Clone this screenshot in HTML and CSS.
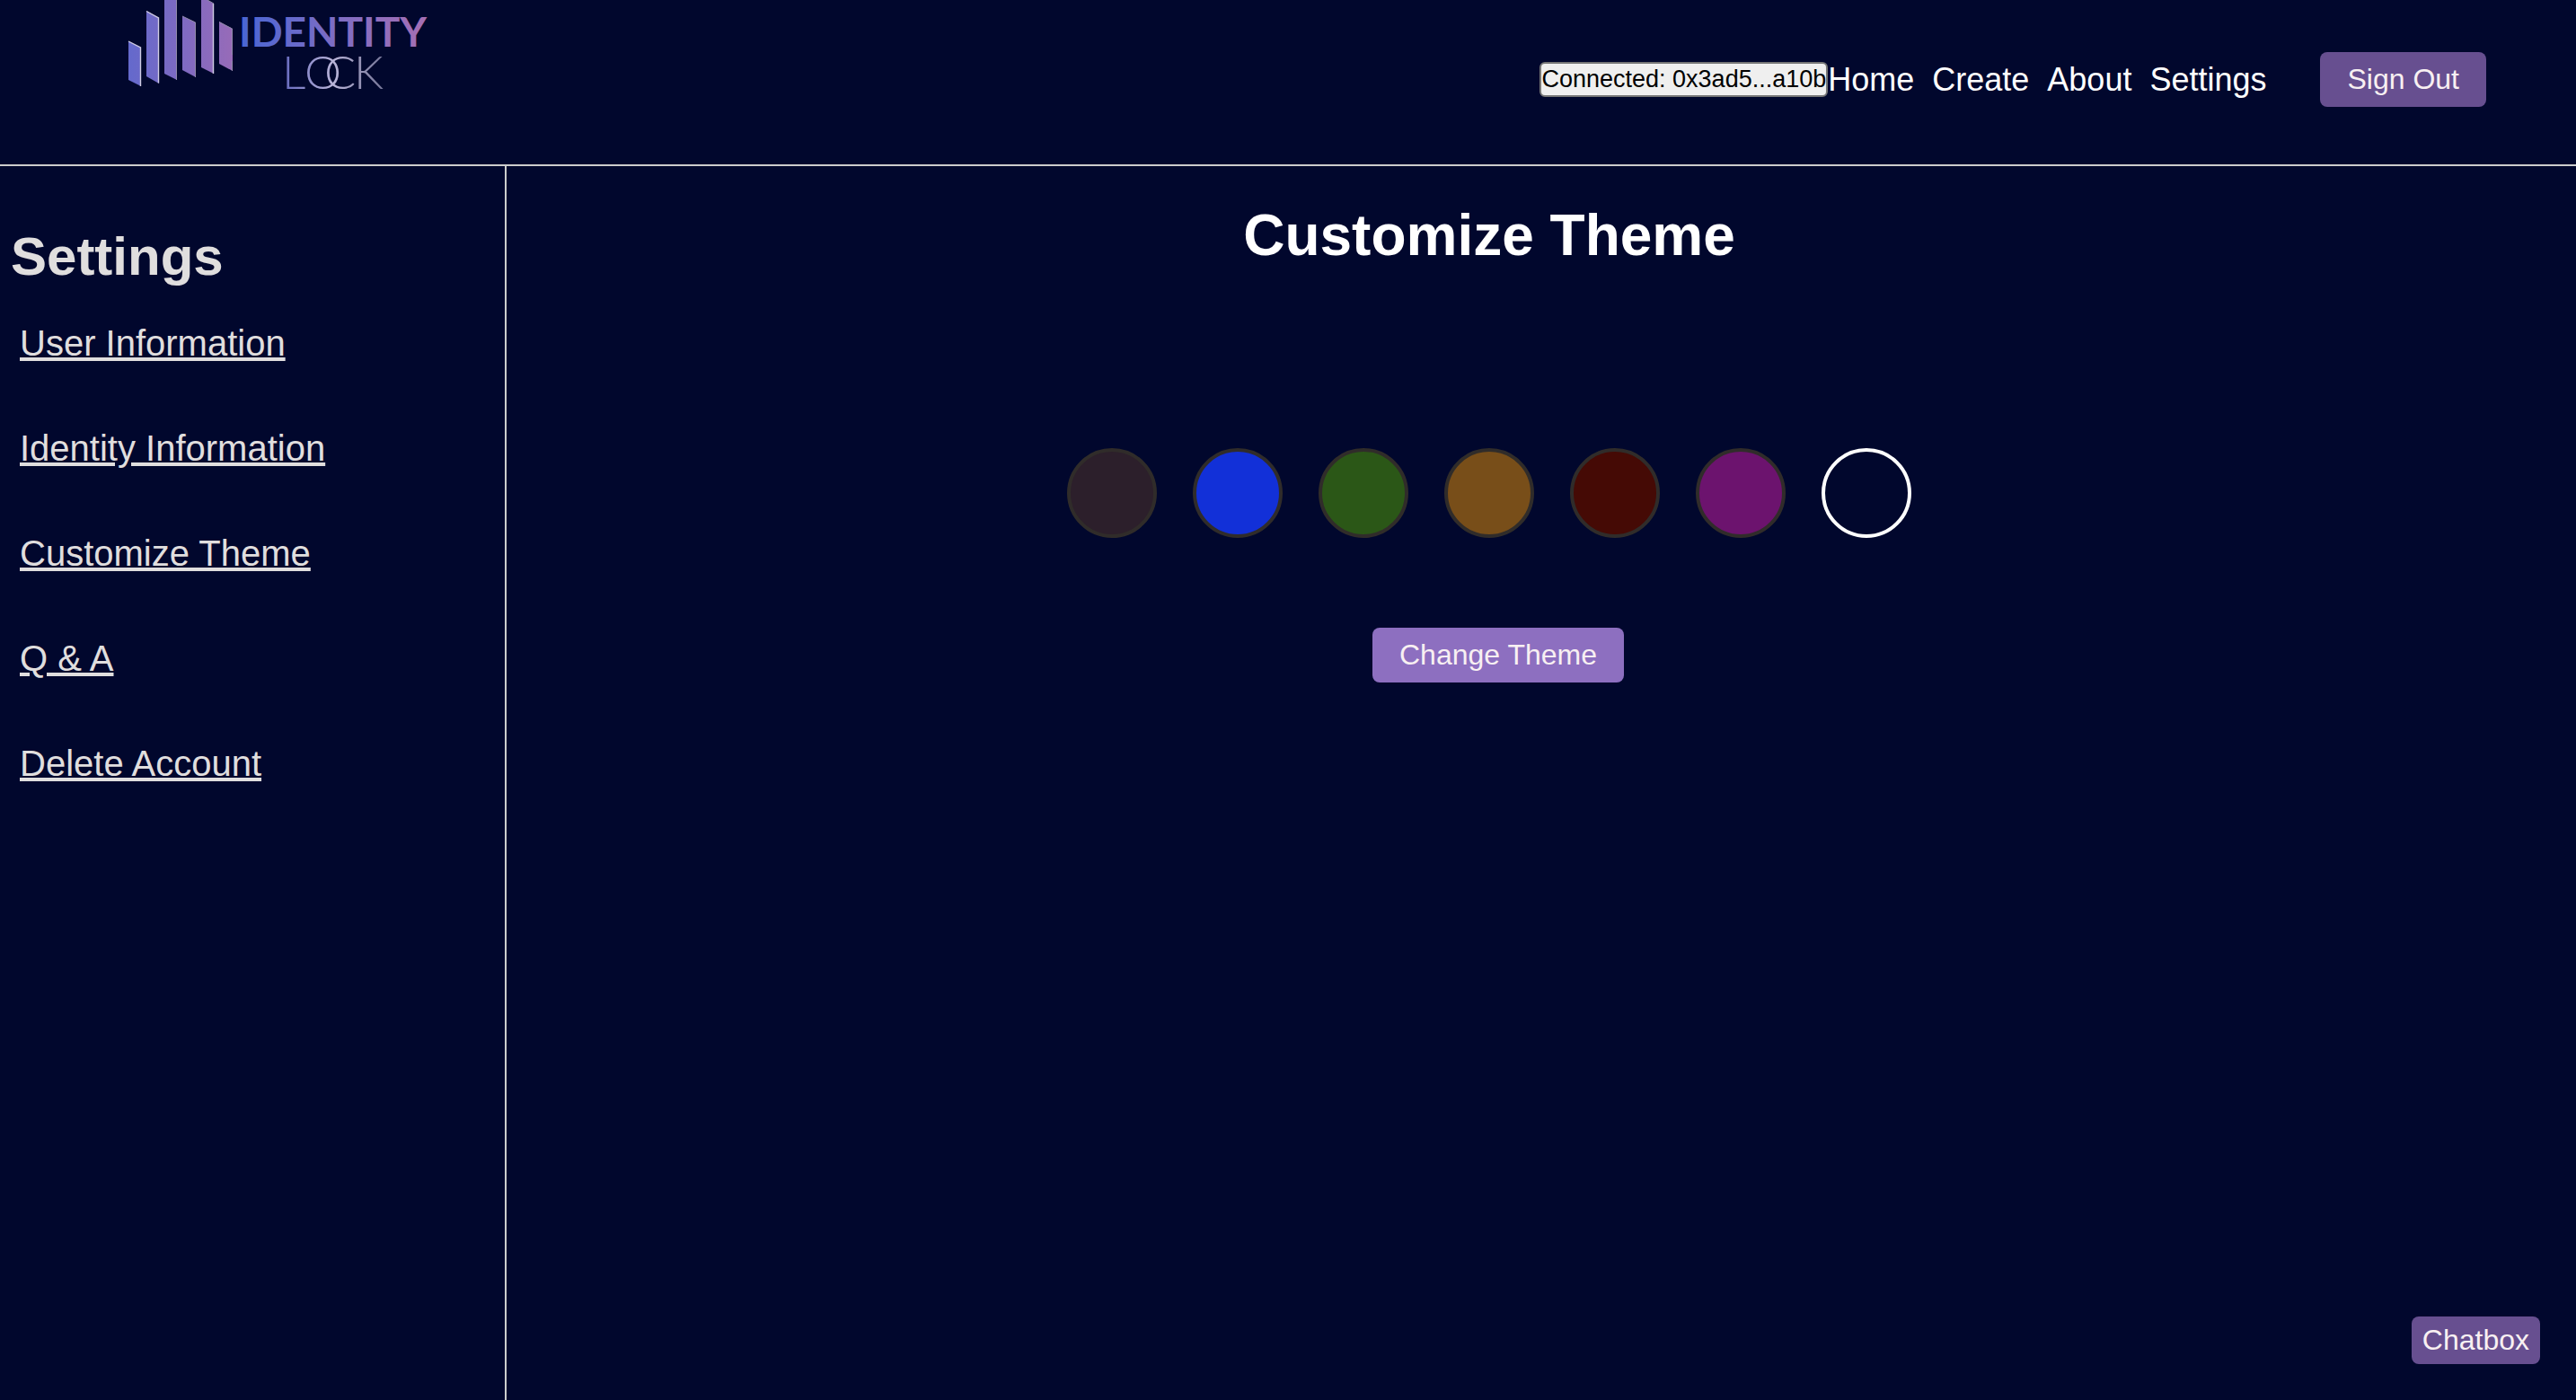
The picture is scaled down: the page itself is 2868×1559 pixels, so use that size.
FILE: index.html
```html
<!DOCTYPE html>
<html lang="en">
<head>
<meta charset="utf-8">
<meta name="viewport" content="width=device-width, initial-scale=1">
<title>Identity Lock - Customize Theme</title>
<link rel="stylesheet" href="styles.css">
</head>
<body>
<header class="header">
  <a class="logo" href="#" aria-label="Identity Lock">
    <svg class="logo-art" viewBox="0 0 360 110" aria-hidden="true">
      <defs>
        <linearGradient id="bars" gradientUnits="userSpaceOnUse" x1="23" y1="0" x2="139" y2="0">
          <stop offset="0" stop-color="#6469cc"/>
          <stop offset="1" stop-color="#976bb8"/>
        </linearGradient>
        <linearGradient id="word" gradientUnits="userSpaceOnUse" x1="150" y1="0" x2="353" y2="0">
          <stop offset="0" stop-color="#4a66d4"/>
          <stop offset="0.5" stop-color="#7d6dc4"/>
          <stop offset="1" stop-color="#a56fb4"/>
        </linearGradient>
        <linearGradient id="lock" gradientUnits="userSpaceOnUse" x1="198" y1="0" x2="304" y2="0">
          <stop offset="0" stop-color="#6a6dc0"/>
          <stop offset="0.5" stop-color="#b9b4d8"/>
          <stop offset="1" stop-color="#7a7a9c"/>
        </linearGradient>
      </defs>
      <path fill="url(#bars)" d="M23 46L37 53V96L23 89ZM43 12L57 20V93L43 85ZM63 -7L77 0V89L63 82ZM83 18L98 25V86L83 78ZM104 -4L118 4V82L104 75ZM124 24L139 32V79L124 71Z"/>
      <path fill="none" stroke="#cfcbe2" stroke-width="1.4" d="M23 46L36.500 53V96M43 12.500L56.500 20V92.500M117.500 4V82"/>
      <path fill="none" stroke="#8f8aa8" stroke-width="1" d="M76.500 0V89M83 18L97.500 25V86M104 -4L118 4M124 24.500L138.500 32V61M138.500 68V79"/>
      <text class="logo-name" x="146" y="52" fill="url(#word)">IDENTITY</text>
      <text class="logo-lock" y="99" fill="url(#lock)"><tspan x="194">L</tspan><tspan x="219">O</tspan><tspan x="241">C</tspan><tspan x="274">K</tspan></text>
    </svg>
  </a>
  <div class="header-actions">
    <button class="wallet" type="button">Connected: 0x3ad5...a10b</button>
    <nav class="nav" aria-label="Main">
      <a href="#">Home</a>
      <a href="#">Create</a>
      <a href="#">About</a>
      <a href="#">Settings</a>
    </nav>
    <button class="button sign-out" type="button">Sign Out</button>
  </div>
</header>
<div class="layout">
  <aside class="sidebar">
    <h2 class="sidebar-title">Settings</h2>
    <nav class="sidebar-links" aria-label="Settings">
      <a href="#">User Information</a>
      <a href="#">Identity Information</a>
      <a href="#">Customize Theme</a>
      <a href="#">Q &amp; A</a>
      <a href="#">Delete Account</a>
    </nav>
  </aside>
  <main class="main">
    <h1 class="title">Customize Theme</h1>
    <form class="theme-form">
      <div class="swatches" role="radiogroup" aria-label="Theme color">
        <input class="swatch charcoal" type="radio" name="theme" value="charcoal" aria-label="Charcoal">
        <input class="swatch blue" type="radio" name="theme" value="blue" aria-label="Blue">
        <input class="swatch green" type="radio" name="theme" value="green" aria-label="Green">
        <input class="swatch amber" type="radio" name="theme" value="amber" aria-label="Amber">
        <input class="swatch red" type="radio" name="theme" value="red" aria-label="Red">
        <input class="swatch purple" type="radio" name="theme" value="purple" aria-label="Purple">
        <input class="swatch navy" type="radio" name="theme" value="navy" aria-label="Navy" checked>
      </div>
      <button class="button change-theme" type="button">Change Theme</button>
    </form>
  </main>
</div>
<button class="button chatbox" type="button">Chatbox</button>
</body>
</html>
```
FILE: styles.css
```css
* {
  box-sizing: border-box;
}

body {
  margin: 0;
  min-height: 100vh;
  display: flex;
  flex-direction: column;
  background: #01072d;
  color: #fff;
  font-family: "Liberation Sans", Arial, sans-serif;
}

h1,
h2 {
  margin: 0;
}

button {
  font-family: inherit;
  cursor: pointer;
}

.header {
  display: flex;
  justify-content: space-between;
  align-items: flex-start;
  padding: 0 100px 0 120px;
  border-bottom: 2px solid #ccc;
}

.logo-art {
  display: block;
  width: 360px;
  height: 110px;
}

.logo-name {
  font-family: Lato, sans-serif;
  font-size: 46px;
  font-weight: 700;
}

.logo-lock {
  font-family: Lato, sans-serif;
  font-size: 52px;
  font-weight: 300;
}

.header-actions {
  display: flex;
  align-items: center;
  padding: 58px 0 64px;
}

.wallet {
  padding: 2px 0;
  border: 2px solid #767676;
  border-radius: 6px;
  background: #efefef;
  color: #000;
  font-size: 27px;
  line-height: 31px;
}

.nav {
  display: flex;
  gap: 20px;
}

.nav a {
  color: #fff;
  font-size: 36px;
  line-height: 42px;
  text-decoration: none;
}

.button {
  padding: 12px 30px;
  border: 0;
  border-radius: 8px;
  background: #674f90;
  color: #f8f0f2;
  font-size: 32px;
  line-height: 37px;
}

.sign-out {
  margin-left: 60px;
}

.layout {
  flex: 1;
  display: grid;
  grid-template-columns: 564px 1fr;
}

.sidebar {
  padding: 66px 12px 40px;
  border-right: 2px solid #ccc;
  color: #e0dede;
}

.sidebar-title {
  font-size: 60px;
  line-height: 69px;
}

.sidebar-links {
  display: flex;
  flex-direction: column;
  align-items: flex-start;
  gap: 70px;
  padding: 39px 10px 0;
}

.sidebar-links a {
  color: inherit;
  font-size: 40px;
  line-height: 47px;
  text-decoration-thickness: 4px;
}

.main {
  padding: 41px 116px 40px 0;
}

.title {
  font-size: 64px;
  line-height: 73px;
  text-align: center;
}

.theme-form {
  display: flex;
  flex-direction: column;
  align-items: center;
  gap: 100px;
  padding-top: 200px;
}

.swatches {
  display: flex;
  gap: 40px;
}

.swatch {
  appearance: none;
  width: 100px;
  height: 100px;
  margin: 0;
  border: 4px solid #302c2a;
  border-radius: 50%;
  cursor: pointer;
}

.swatch:checked {
  border-color: #fff;
}

.charcoal {
  background: #2c1f2b;
}

.blue {
  background: #1230d8;
}

.green {
  background: #2b5717;
}

.amber {
  background: #784e19;
}

.red {
  background: #450a05;
}

.purple {
  background: #6c136e;
}

.navy {
  background: #01072d;
}

.change-theme {
  margin-left: 20px;
  background: #8d6fc0;
}

.chatbox {
  position: fixed;
  right: 40px;
  bottom: 40px;
  padding: 8px 12px;
}
```
